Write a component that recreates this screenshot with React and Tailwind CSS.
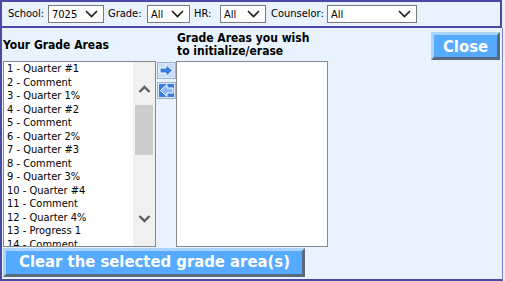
import React from 'react';

const font = "font-['DejaVu_Sans_Condensed','Liberation_Sans',sans-serif]";

const gradeAreas = [
  '1 - Quarter #1',
  '2 - Comment',
  '3 - Quarter 1%',
  '4 - Quarter #2',
  '5 - Comment',
  '6 - Quarter 2%',
  '7 - Quarter #3',
  '8 - Comment',
  '9 - Quarter 3%',
  '10 - Quarter #4',
  '11 - Comment',
  '12 - Quarter 4%',
  '13 - Progress 1',
  '14 - Comment',
];

function Chevron() {
  return (
    <svg width="13" height="8" viewBox="0 0 13 8">
      <polyline points="1,1 6.5,6.5 12,1" fill="none" stroke="#1a1a1a" strokeWidth="1.6" />
    </svg>
  );
}

function FakeSelect({ value, width }) {
  return (
    <div className={`flex h-[18px] items-center justify-between border border-[#7a7a7a] bg-white pl-[3px] pr-[5px] ${width}`}>
      <span className="leading-none">{value}</span>
      <Chevron />
    </div>
  );
}

function ScrollChevron({ up }) {
  return (
    <svg width="13" height="10" viewBox="0 0 13 10">
      <polyline
        points={up ? '1.5,8 6.5,3 11.5,8' : '1.5,2 6.5,7 11.5,2'}
        fill="none"
        stroke="#5f5f5f"
        strokeWidth="2.4"
      />
    </svg>
  );
}

function ArrowButton({ dir }) {
  const right = dir === 'right';
  return (
    <svg width="19" height="17" viewBox="0 0 19 17">
      <rect x="0.5" y="0.5" width="18" height="16" fill="#dce8fa" stroke="#9ab0d8" />
      <rect x="2" y="2" width="15" height="13" fill={right ? '#c9dcf7' : '#3d7de0'} />
      {right ? (
        <polygon points="3,6 9,6 9,2.5 15.5,8.5 9,14.5 9,11 3,11" fill="#3a7be0" stroke="#ffffff" strokeWidth="1" />
      ) : (
        <polygon points="16,6 10,6 10,2.5 3.5,8.5 10,14.5 10,11 16,11" fill="#8bb8f5" stroke="#ffffff" strokeWidth="1" />
      )}
    </svg>
  );
}

export default function App() {
  return (
    <div className={`h-[281px] w-[505px] overflow-hidden bg-[#e9f3fe] text-[11px] text-black ${font}`}>
      {/* filters */}
      <div className="flex h-[28px] w-[502px] items-center border-2 border-[#4a4aa6] pl-[6px]">
        <span className="w-[40px]">School:</span>
        <FakeSelect value="7025" width="w-[56px]" />
        <span className="ml-[4px] w-[39px]">Grade:</span>
        <FakeSelect value="All" width="w-[43px]" />
        <span className="ml-[4px] w-[26px]">HR:</span>
        <FakeSelect value="All" width="w-[46px]" />
        <span className="ml-[5px] w-[56px]">Counselor:</span>
        <FakeSelect value="All" width="w-[90px]" />
      </div>

      <div className="flex h-[253px] w-[503px] flex-col border-b-2 border-l-2 border-r border-[#4a4aa6] border-r-[#7c7cd0] pl-[1px]">
        {/* headings */}
        <div className="flex h-[33px]">
          <div className="flex w-[153px] items-center text-[12px] font-bold">Your Grade Areas</div>
          <div className="w-[20px]" />
          <div className="flex w-[152px] items-center pl-[1px] text-[12px] font-bold leading-[13px]">
            Grade Areas you wish
            <br />
            to initialize/erase
          </div>
          <button className="ml-auto mr-[2px] mt-[4px] h-[28px] w-[69px] border-[3px] border-b-[#5a6a7e] border-l-[#aad4ff] border-r-[#5a6a7e] border-t-[#aad4ff] bg-[#56aaff] text-[16.5px] font-bold text-white">
            Close
          </button>
        </div>

        {/* lists */}
        <div className="flex h-[186px]">
          <div className="flex h-full w-[153px] border border-[#828790] bg-white">
            <div className="flex-1 overflow-hidden pl-[3px] leading-[13.5px]">
              {gradeAreas.map((g) => (
                <div key={g} className="whitespace-nowrap">{g}</div>
              ))}
            </div>
            <div className="flex w-[22px] flex-col items-center bg-[#f0f0f0]">
              <div className="h-[22px]" />
              <ScrollChevron up />
              <div className="h-[11px]" />
              <div className="h-[50px] w-[18px] bg-[#cdcdcd]" />
              <div className="flex-1" />
              <ScrollChevron />
              <div className="h-[22px]" />
            </div>
          </div>
          <div className="flex w-[20px] flex-col items-center gap-[3px] pt-[1px]">
            <ArrowButton dir="right" />
            <ArrowButton dir="left" />
          </div>
          <div className="h-full w-[152px] border border-[#828790] bg-white" />
        </div>

        <button className="mt-[1px] flex h-[29px] w-[302px] items-center border-[3px] border-b-[#5a6a7e] border-l-[#aad4ff] border-r-[#5a6a7e] border-t-[#aad4ff] bg-[#56aaff] pl-[13px] text-[16.5px] font-bold text-white">
          Clear the selected grade area(s)
        </button>
      </div>
    </div>
  );
}
